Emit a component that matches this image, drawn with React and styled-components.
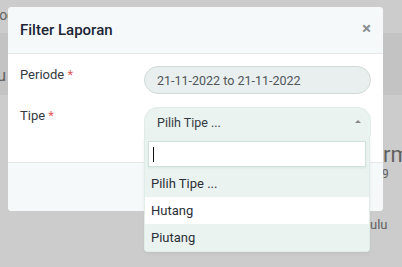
import React from 'react';
import styled, { createGlobalStyle } from 'styled-components';

const GlobalStyle = createGlobalStyle`
  html, body {
    margin: 0;
    padding: 0;
    background: #ffffff;
    font-family: Roboto, "Liberation Sans", sans-serif;
    overflow: hidden;
  }
`;

const Page = styled.div`
  width: 402px;
  height: 267px;
  overflow: hidden;
  color: #7a7a7a;
`;

const TopBar = styled.div`
  height: 33px;
  display: flex;
  align-items: center;
  font-size: 14px;
  span {
    margin-left: -13px;
    margin-top: -4px;
  }
`;

const Band = styled.div`
  height: 62px;
  background: #f4f4f4;
  display: flex;
  align-items: flex-end;
  font-size: 17px;
  span {
    margin-left: -12px;
    padding-bottom: 10px;
  }
`;

const Side = styled.div`
  display: flex;
  flex-direction: column;
  padding-left: 383px;
  white-space: nowrap;
`;

const SideTitle = styled.div`
  font-size: 22px;
  margin-top: 47px;
`;

const SideSub = styled.div`
  font-size: 12px;
  margin-left: -1px;
`;

const SideNote = styled.div`
  font-size: 13px;
  margin-top: 36px;
  margin-left: -13px;
`;

const Backdrop = styled.div`
  position: fixed;
  inset: 0;
  background: rgba(0, 0, 0, 0.2);
  padding: 7px 0 0 8px;
`;

const Modal = styled.div`
  width: 375px;
  background: #ffffff;
  border-radius: 4px;
`;

const Header = styled.div`
  height: 47px;
  box-sizing: border-box;
  display: flex;
  align-items: center;
  justify-content: space-between;
  padding: 0 12px;
  background: #f6f9f9;
  border-bottom: 1px solid #e3eae8;
  border-radius: 4px 4px 0 0;
`;

const Title = styled.h5`
  margin: 0;
  font-size: 15px;
  font-weight: 500;
  color: #1c2536;
`;

const Close = styled.button`
  border: 0;
  background: none;
  padding: 0;
  margin-top: -4px;
  font-size: 17px;
  line-height: 1;
  color: #8a8f94;
  font-family: Roboto, "Liberation Sans", sans-serif;
  font-weight: 700;
`;

const Body = styled.div`
  padding: 12px 12px 26px;
  display: flex;
  flex-direction: column;
  gap: 13px;
`;

const Row = styled.div`
  display: grid;
  grid-template-columns: 124px 1fr;
`;

const Label = styled.label`
  font-size: 13px;
  color: #333a40;
  padding-top: 1px;
  &::after {
    content: ' *';
    color: #e05a5a;
  }
`;

const DateInput = styled.div`
  height: 28px;
  box-sizing: border-box;
  border: 1px solid #cfdcd8;
  border-radius: 14px;
  background: #e9eeee;
  display: flex;
  align-items: center;
  padding: 0 12px;
  font-size: 12.5px;
  color: #50565c;
`;

const SelectWrap = styled.div`
  position: relative;
`;

const SelectBox = styled.div`
  height: 29px;
  box-sizing: border-box;
  border: 1px solid #e0ece8;
  border-bottom: 0;
  border-radius: 14px 14px 0 0;
  background: #eaf3f0;
  display: flex;
  align-items: center;
  justify-content: space-between;
  padding: 0 9px 0 12px;
  font-size: 12.5px;
  color: #333a40;
`;

const Arrow = styled.span`
  width: 0;
  height: 0;
  border-left: 3px solid transparent;
  border-right: 3px solid transparent;
  border-bottom: 3px solid #888888;
  margin-top: -2px;
`;

const Dropdown = styled.div`
  position: absolute;
  top: 100%;
  left: 0;
  right: 1px;
  background: #ffffff;
  border: 1px solid #e0ece8;
  border-top: 0;
  border-radius: 0 0 4px 4px;
  overflow: hidden;
  box-shadow: 0 2px 4px rgba(0, 0, 0, 0.06);
`;

const SearchArea = styled.div`
  background: #eaf3f0;
  padding: 5px 3px 3px 3px;
`;

const Caret = styled.span`
  display: inline-block;
  width: 1px;
  height: 15px;
  background: #111;
`;

const SearchField = styled.div`
  height: 26px;
  box-sizing: border-box;
  border: 1px solid #cfe3dc;
  background: #ffffff;
  display: flex;
  align-items: center;
  padding: 0 4px;
  box-shadow: 0 1px 2px rgba(0, 80, 40, 0.08);
`;

const Option = styled.div`
  height: 27px;
  display: flex;
  align-items: center;
  padding: 0 6px;
  font-size: 13px;
  color: #2b3036;
  background: ${p => (p.$active ? '#eaf3f0' : '#ffffff')};
`;

const Footer = styled.div`
  height: 49px;
  box-sizing: border-box;
  background: #f6f9f9;
  border-top: 1px solid #e3eae8;
  border-radius: 0 0 4px 4px;
`;

const options = [
  { label: 'Pilih Tipe ...', active: true },
  { label: 'Hutang', active: false },
  { label: 'Piutang', active: true },
];

export default function App() {
  return (
    <>
      <GlobalStyle />
      <Page>
        <TopBar><span>Blog</span></TopBar>
        <Band><span>Lu</span></Band>
        <Side>
          <SideTitle>rm</SideTitle>
          <SideSub>9</SideSub>
          <SideNote>ulu</SideNote>
        </Side>
      </Page>
      <Backdrop>
        <Modal>
          <Header>
            <Title>Filter Laporan</Title>
            <Close>×</Close>
          </Header>
          <Body>
            <Row>
              <Label>Periode</Label>
              <DateInput>21-11-2022 to 21-11-2022</DateInput>
            </Row>
            <Row>
              <Label>Tipe</Label>
              <SelectWrap>
                <SelectBox>
                  Pilih Tipe ...
                  <Arrow />
                </SelectBox>
                <Dropdown>
                  <SearchArea>
                    <SearchField><Caret /></SearchField>
                  </SearchArea>
                  {options.map(o => (
                    <Option key={o.label} $active={o.active}>{o.label}</Option>
                  ))}
                </Dropdown>
              </SelectWrap>
            </Row>
          </Body>
          <Footer />
        </Modal>
      </Backdrop>
    </>
  );
}
